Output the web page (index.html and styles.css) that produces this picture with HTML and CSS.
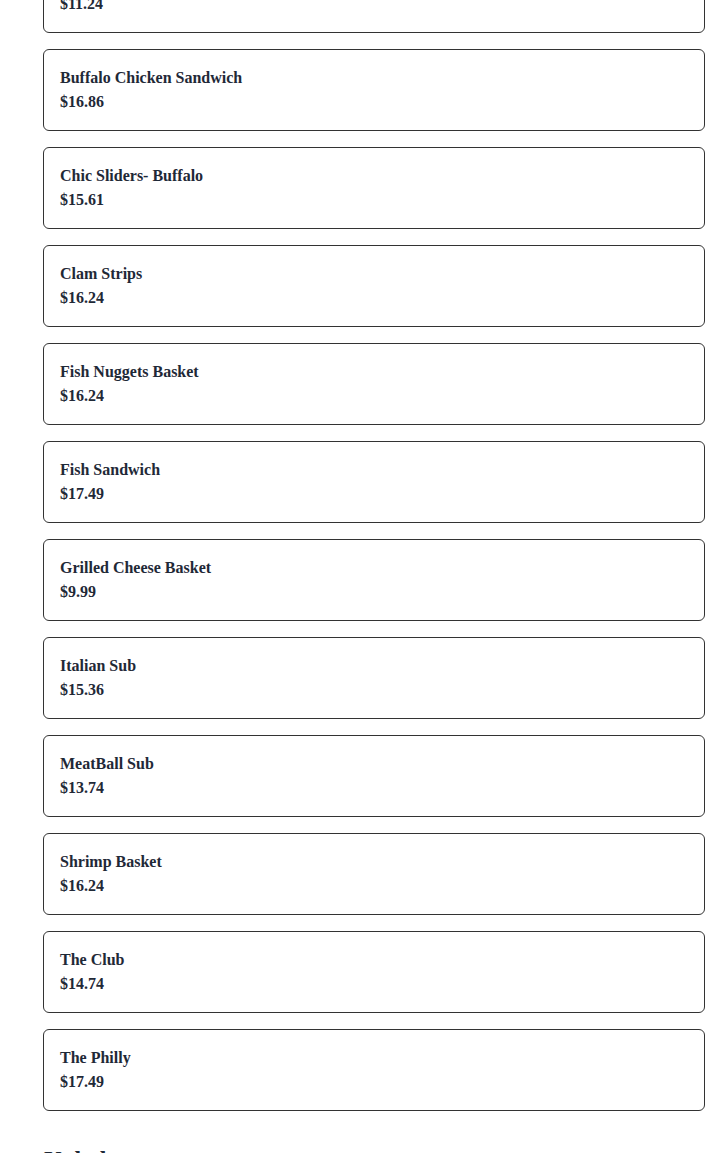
FILE: index.html
```html
<!DOCTYPE html>
<html>
<head>
<meta charset="utf-8">
<link rel="stylesheet" href="styles.css">
</head>
<body>
<main class="menu">
  <section class="category">
    <div class="items">
      <div class="item"><div class="name">Bacon Cheeseburger</div><div class="price">$11.24</div></div>
      <div class="item"><div class="name">Buffalo Chicken Sandwich</div><div class="price">$16.86</div></div>
      <div class="item"><div class="name">Chic Sliders- Buffalo</div><div class="price">$15.61</div></div>
      <div class="item"><div class="name">Clam Strips</div><div class="price">$16.24</div></div>
      <div class="item"><div class="name">Fish Nuggets Basket</div><div class="price">$16.24</div></div>
      <div class="item"><div class="name">Fish Sandwich</div><div class="price">$17.49</div></div>
      <div class="item"><div class="name">Grilled Cheese Basket</div><div class="price">$9.99</div></div>
      <div class="item"><div class="name">Italian Sub</div><div class="price">$15.36</div></div>
      <div class="item"><div class="name">MeatBall Sub</div><div class="price">$13.74</div></div>
      <div class="item"><div class="name">Shrimp Basket</div><div class="price">$16.24</div></div>
      <div class="item"><div class="name">The Club</div><div class="price">$14.74</div></div>
      <div class="item"><div class="name">The Philly</div><div class="price">$17.49</div></div>
    </div>
  </section>
  <section class="category">
    <h2 class="cat-title">Kabobs</h2>
  </section>
</main>
</body>
</html>
```
FILE: styles.css
```css
html, body {
  margin: 0;
  padding: 0;
  background: #ffffff;
}
body {
  font-family: "Liberation Serif", "Times New Roman", serif;
  color: #1f2937;
  overflow: hidden;
}
.menu {
  padding: 0 23px 0 43px;
  margin-top: -49px;
}
.items {
  display: flex;
  flex-direction: column;
  gap: 16px;
}
.item {
  border: 1px solid #333333;
  border-radius: 6px;
  padding: 16px;
  font-size: 16px;
  line-height: 24px;
  font-weight: 700;
}
.cat-title {
  margin: 32px 0 0 1px;
  font-size: 24px;
  line-height: 32px;
  font-weight: 700;
  color: #1f2937;
}
```
